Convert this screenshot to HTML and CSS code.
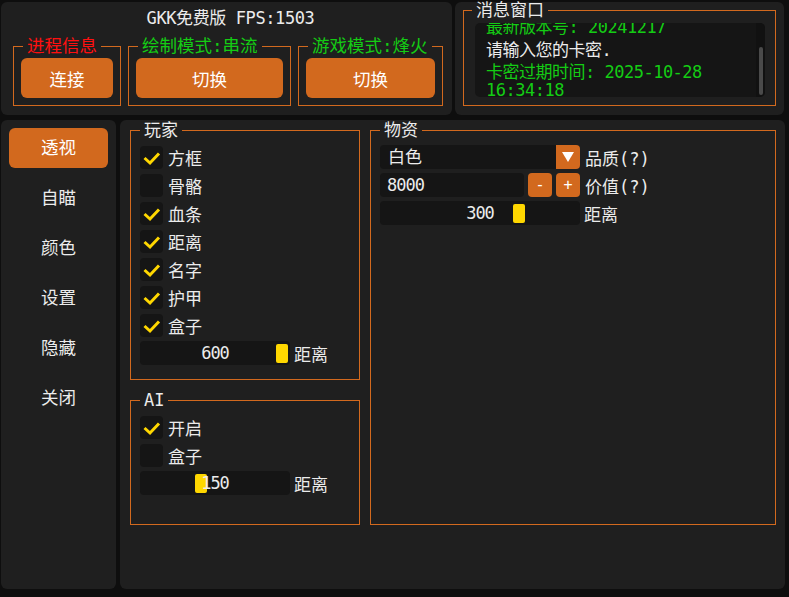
FILE: index.html
```html
<!DOCTYPE html>
<html lang="zh-CN">
<head>
    <meta charset="UTF-8">
    <meta name="viewport" content="width=device-width, initial-scale=1.0">
    <title>GKK</title>
    <link rel="stylesheet" href="styles.css">
</head>
<body>
    <div class="app">
        <div class="top">
            <section class="panel status">
                <div class="title">GKK免费版 FPS:1503</div>
                <div class="status-groups">
                    <fieldset class="group g-proc">
                        <legend class="red">进程信息</legend>
                        <button class="btn">连接</button>
                    </fieldset>
                    <fieldset class="group g-draw">
                        <legend class="green">绘制模式:串流</legend>
                        <button class="btn">切换</button>
                    </fieldset>
                    <fieldset class="group g-game">
                        <legend class="green">游戏模式:烽火</legend>
                        <button class="btn">切换</button>
                    </fieldset>
                </div>
            </section>
            <section class="panel msg-panel">
                <fieldset class="group msg-group">
                    <legend>消息窗口</legend>
                    <div class="msg-box">
                        <div class="msg-lines">
                            <p class="green">最新版本号: 20241217</p>
                            <p>请输入您的卡密.</p>
                            <p class="green">卡密过期时间: 2025-10-28<br>16:34:18</p>
                        </div>
                        <div class="scroll-track"><div class="scroll-grab"></div></div>
                    </div>
                </fieldset>
            </section>
        </div>

        <div class="main">
            <nav class="panel sidebar">
                <a class="nav-item active">透视</a>
                <a class="nav-item">自瞄</a>
                <a class="nav-item">颜色</a>
                <a class="nav-item">设置</a>
                <a class="nav-item">隐藏</a>
                <a class="nav-item">关闭</a>
            </nav>

            <section class="panel content">
                <div class="columns">
                    <div class="col-left">
                        <!-- 玩家 -->
                        <fieldset class="group opt-group player">
                            <legend>玩家</legend>
                            <div class="row"><span class="check on"><svg viewBox="0 0 23 23" width="23" height="23"><polyline points="4.5,12 10,17 19,7.5" /></svg></span>方框</div>
                            <div class="row"><span class="check"></span>骨骼</div>
                            <div class="row"><span class="check on"><svg viewBox="0 0 23 23" width="23" height="23"><polyline points="4.5,12 10,17 19,7.5" /></svg></span>血条</div>
                            <div class="row"><span class="check on"><svg viewBox="0 0 23 23" width="23" height="23"><polyline points="4.5,12 10,17 19,7.5" /></svg></span>距离</div>
                            <div class="row"><span class="check on"><svg viewBox="0 0 23 23" width="23" height="23"><polyline points="4.5,12 10,17 19,7.5" /></svg></span>名字</div>
                            <div class="row"><span class="check on"><svg viewBox="0 0 23 23" width="23" height="23"><polyline points="4.5,12 10,17 19,7.5" /></svg></span>护甲</div>
                            <div class="row"><span class="check on"><svg viewBox="0 0 23 23" width="23" height="23"><polyline points="4.5,12 10,17 19,7.5" /></svg></span>盒子</div>
                            <div class="row">
                                <div class="slider small"><i class="grab" style="left: 136px"></i><span>600</span></div>
                                距离
                            </div>
                        </fieldset>

                        <!-- AI -->
                        <fieldset class="group opt-group ai">
                            <legend>AI</legend>
                            <div class="row"><span class="check on"><svg viewBox="0 0 23 23" width="23" height="23"><polyline points="4.5,12 10,17 19,7.5" /></svg></span>开启</div>
                            <div class="row"><span class="check"></span>盒子</div>
                            <div class="row">
                                <div class="slider small"><i class="grab" style="left: 55px"></i><span>150</span></div>
                                距离
                            </div>
                        </fieldset>
                    </div>

                    <!-- 物资 -->
                    <fieldset class="group opt-group loot">
                        <legend>物资</legend>
                        <div class="row">
                            <div class="combo">
                                <span class="combo-text">白色</span>
                                <span class="combo-arrow"><svg viewBox="0 0 24 24" width="24" height="24"><polygon points="6,7 18,7 12,17" /></svg></span>
                            </div>
                            品质(?)
                        </div>
                        <div class="row">
                            <div class="num">8000</div>
                            <button class="step">-</button>
                            <button class="step">+</button>
                            价值(?)
                        </div>
                        <div class="row">
                            <div class="slider wide"><i class="grab" style="left: 133px"></i><span>300</span></div>
                            距离
                        </div>
                    </fieldset>
                </div>
            </section>
        </div>
    </div>
</body>
</html>
```

FILE: styles.css
```css
* {
    box-sizing: border-box;
}
body {
    margin: 0;
    background: #0e0e0e;
    font-family: "DejaVu Sans Mono", "Noto Sans CJK SC", monospace;
    font-size: 17px;
    color: #ececec;
}
.app {
    width: 789px;
    height: 597px;
    padding: 2px 0 0 1px;
    display: flex;
    flex-direction: column;
    gap: 5px;
}
.panel {
    background: #1f1f1f;
    border-radius: 6px;
}
.red {
    color: #ff1010;
}
.green {
    color: #14cc14;
}

/* group boxes */
.group {
    margin: 0;
    min-width: 0;
    border: 1px solid #d2691e;
}
.group legend {
    padding: 0 4px;
    line-height: 20px;
}

/* top row */
.top {
    display: flex;
    gap: 3px;
    height: 113px;
}
.status {
    width: 451px;
}
.title {
    padding-top: 6px;
    line-height: 20px;
    text-align: center;
    padding-left: 8px;
    letter-spacing: -0.4px;
}
.status-groups {
    display: flex;
    gap: 7px;
    margin-top: 8px;
    padding-left: 12px;
}
.status-groups .group {
    padding: 2px 7px 7px;
}
.status-groups legend {
    margin-left: 2px;
    font-size: 17.5px;
}
.g-proc {
    width: 108px;
}
.g-draw {
    width: 163px;
}
.g-game {
    width: 145px;
}
.btn {
    display: block;
    width: 100%;
    height: 40px;
    border: none;
    border-radius: 6px;
    background: #d2691e;
    color: #fff;
    font-family: inherit;
    font-size: 17.5px;
}

.msg-panel {
    width: 329px;
}
.msg-group {
    margin: 0 8px;
    padding: 5px 10px 8px 11px;
}
.msg-group legend {
    line-height: 16px;
    margin-left: -3px;
}
.msg-box {
    position: relative;
    height: 74px;
    overflow: hidden;
    background: #151515;
    border-radius: 5px;
    padding-left: 11px;
}
.msg-lines {
    margin-top: -5px;
}
.msg-lines p {
    margin: 0 0 4.5px;
    line-height: 18px;
    letter-spacing: -0.5px;
}
.scroll-track {
    position: absolute;
    top: 0;
    right: 0;
    bottom: 0;
    width: 9px;
    background: #111;
}
.scroll-grab {
    position: absolute;
    top: 24px;
    left: 3px;
    width: 4px;
    height: 48px;
    background: #4a4a4a;
    border-radius: 2px;
}

/* main row */
.main {
    display: flex;
    gap: 4px;
    height: 469px;
}
.sidebar {
    width: 115px;
    padding: 8px;
    display: flex;
    flex-direction: column;
    gap: 10px;
}
.nav-item {
    height: 40px;
    line-height: 40px;
    text-align: center;
    border-radius: 6px;
    font-size: 17.5px;
}
.nav-item.active {
    background: #d2691e;
    color: #fff;
}
.content {
    width: 665px;
    padding-left: 10px;
}
.columns {
    display: flex;
    gap: 10px;
}
.col-left {
    display: flex;
    flex-direction: column;
    gap: 10px;
}
.opt-group {
    display: flex;
    flex-direction: column;
    gap: 4px;
    padding: 5px 9px 14px;
}
.player,
.ai {
    width: 230px;
}
.ai {
    padding-bottom: 29px;
}
.loot {
    width: 406px;
}
.row {
    display: flex;
    align-items: center;
    gap: 5px;
    height: 24px;
}

.check {
    width: 23px;
    height: 23px;
    border-radius: 4px;
    background: #151515;
}
.check svg {
    display: block;
}
.check polyline {
    fill: none;
    stroke: #ffd700;
    stroke-width: 3;
}

.slider {
    position: relative;
    height: 24px;
    line-height: 24px;
    text-align: center;
    background: #151515;
    border-radius: 4px;
    margin-right: -1px;
    letter-spacing: -1px;
}
.slider span {
    position: relative;
}
.slider.small {
    width: 150px;
}
.slider.wide {
    width: 200px;
}
.grab {
    position: absolute;
    top: 3px;
    width: 12px;
    height: 19px;
    background: #ffd700;
    border-radius: 2px;
}

.combo {
    display: flex;
    width: 200px;
    height: 24px;
    border-radius: 4px;
    overflow: hidden;
}
.combo-text {
    flex: 1;
    background: #151515;
    line-height: 24px;
    padding-left: 8px;
}
.combo-arrow {
    width: 24px;
    background: #d2691e;
}
.combo-arrow svg {
    display: block;
}
.combo-arrow polygon {
    fill: #fff;
}
.num {
    width: 144px;
    height: 24px;
    line-height: 24px;
    padding-left: 7px;
    background: #151515;
    border-radius: 4px;
    margin-right: -1px;
    letter-spacing: -1px;
}
.step {
    width: 24px;
    height: 24px;
    padding: 0;
    border: none;
    border-radius: 4px;
    background: #d2691e;
    color: #fff;
    font-family: inherit;
    font-size: 15px;
}
.step + .step {
    margin-left: -1px;
}
```
